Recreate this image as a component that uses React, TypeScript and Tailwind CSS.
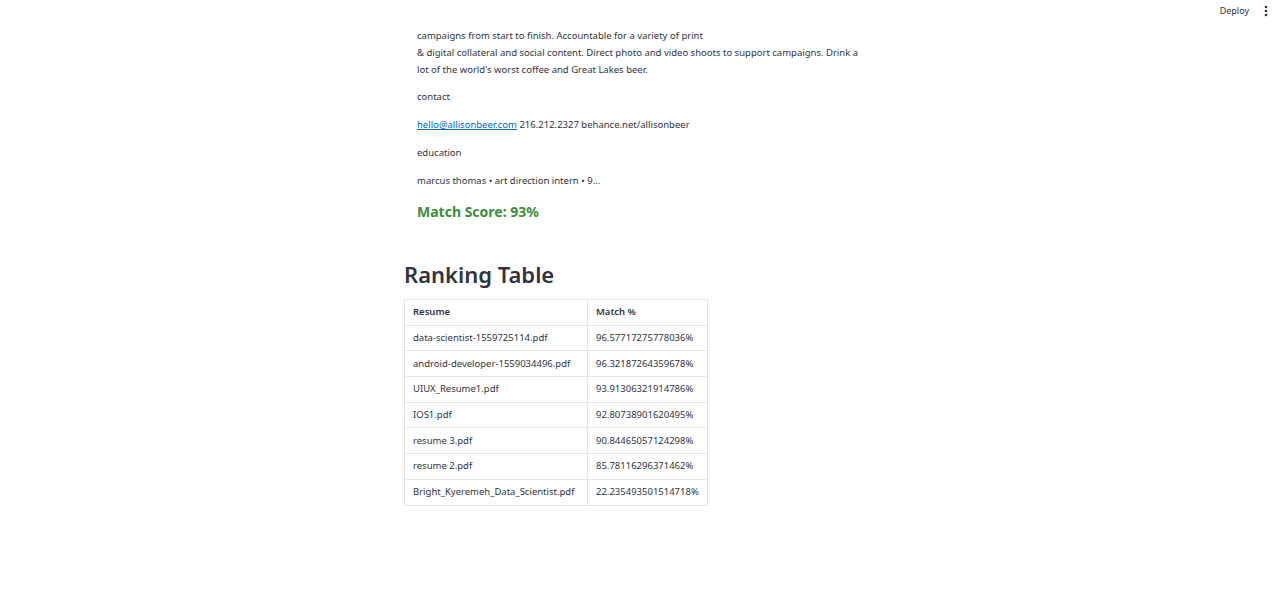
const rows: [string, string][] = [
  ['data-scientist-1559725114.pdf', '96.57717275778036%'],
  ['android-developer-1559034496.pdf', '96.32187264359678%'],
  ['UIUX_Resume1.pdf', '93.91306321914786%'],
  ['IOS1.pdf', '92.80738901620495%'],
  ['resume 3.pdf', '90.84465057124298%'],
  ['resume 2.pdf', '85.78116296371462%'],
  ['Bright_Kyeremeh_Data_Scientist.pdf', '22.235493501514718%'],
];

const Header = () => (
  <div className="flex h-[22px] items-center justify-end gap-[15px] pr-[10px]">
    <span className="text-[9px] text-[#31333f]">Deploy</span>
    <svg width="4" height="12" viewBox="0 0 4 12" className="mr-[2px]">
      <circle cx="2" cy="2" r="1.3" fill="#31333f" />
      <circle cx="2" cy="6" r="1.3" fill="#31333f" />
      <circle cx="2" cy="10" r="1.3" fill="#31333f" />
    </svg>
  </div>
);

export default function App() {
  return (
    <div className="min-h-[600px] bg-white font-['Noto_Sans',sans-serif] text-[#31333f]">
      <Header />
      <div className="mx-auto w-[472px]">
        <div className="mt-[5px] w-[458px] pl-[13px] text-[9.5px] leading-[17px]">
          <p>
            campaigns from start to finish. Accountable for a variety of print
            <br />& digital collateral and social content. Direct photo and video shoots to support campaigns. Drink a
            lot of the world's worst coffee and Great Lakes beer.
          </p>
          <p className="mt-[10px]">contact</p>
          <p className="mt-[11px]">
            <a className="text-[#0068c9] underline">hello@allisonbeer.com</a> 216.212.2327 behance.net/allisonbeer
          </p>
          <p className="mt-[11px]">education</p>
          <p className="mt-[11px]">marcus thomas • art direction intern • 9...</p>
          <p className="mt-[13px] text-[14px] font-bold leading-[20px] text-[#3d8c40]">Match Score: 93%</p>
        </div>
        <h2 className="mt-[37px] text-[22px] font-semibold leading-[30px]">Ranking Table</h2>
        <table className="mt-[10px] table-fixed border-collapse text-[9.5px]">
          <thead>
            <tr className="h-[25.7px]">
              <th className="w-[183px] border border-[#e6e6ea] px-[8px] text-left font-semibold">Resume</th>
              <th className="w-[117px] border border-[#e6e6ea] px-[8px] text-left font-semibold">Match %</th>
            </tr>
          </thead>
          <tbody>
            {rows.map(([name, pct]) => (
              <tr key={name} className="h-[25.7px]">
                <td className="border border-[#e6e6ea] px-[8px] whitespace-nowrap">{name}</td>
                <td className="border border-[#e6e6ea] px-[8px] whitespace-nowrap">{pct}</td>
              </tr>
            ))}
          </tbody>
        </table>
      </div>
    </div>
  );
}
